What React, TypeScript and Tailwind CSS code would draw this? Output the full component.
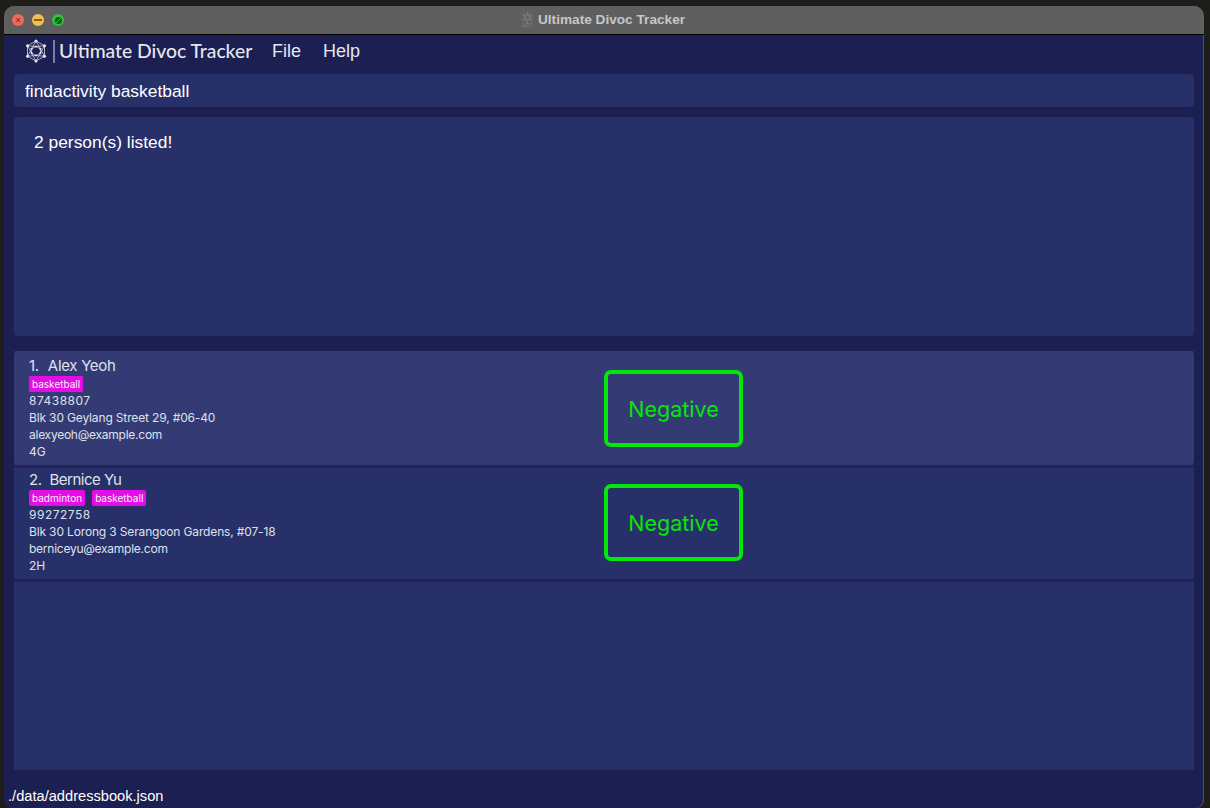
const Logo = ({ size = 20, color = "#e8e8f0", sw = 0.7 }: { size?: number; color?: string; sw?: number }) => {
  const outer: [number, number][] = [[12, 2], [20.5, 6.8], [20.5, 17.2], [12, 22], [3.5, 17.2], [3.5, 6.8]];
  const inner: [number, number][] = [[12, 7.5], [16.4, 9.8], [16.4, 14.2], [12, 16.5], [7.6, 14.2], [7.6, 9.8]];
  return (
    <svg width={size} height={size} viewBox="0 0 24 24" fill="none" stroke={color} strokeWidth={sw}>
      <polygon points={outer.map((p) => p.join(",")).join(" ")} />
      <polygon points={inner.map((p) => p.join(",")).join(" ")} />
      {outer.map((p, i) => (
        <g key={i}>
          <line x1={p[0]} y1={p[1]} x2={inner[(i + 1) % 6][0]} y2={inner[(i + 1) % 6][1]} />
          <line x1={p[0]} y1={p[1]} x2={inner[(i + 5) % 6][0]} y2={inner[(i + 5) % 6][1]} />
        </g>
      ))}
      {outer.map((p, i) => (
        <circle key={i} cx={p[0]} cy={p[1]} r="1.5" fill={color} stroke="none" />
      ))}
      {inner.map((p, i) => (
        <circle key={i} cx={p[0]} cy={p[1]} r="1.1" fill={color} stroke="none" />
      ))}
    </svg>
  );
};

const Card = ({
  index,
  name,
  tags,
  phone,
  address,
  email,
  room,
  bg,
  h,
  pt,
  nameClass,
}: {
  index: number;
  name: string;
  tags: string[];
  phone: string;
  address: string;
  email: string;
  room: string;
  bg: string;
  h: string;
  pt: string;
  nameClass: string;
}) => (
  <div className={`flex ${h} rounded-[5px] pl-[15px] ${pt} ${bg}`}>
    <div className="flex w-[575px] shrink-0 flex-col font-['Inter',sans-serif] text-[12px] leading-[17px] text-[#dfe0ec]">
      <div className={`flex h-[18px] items-center text-[15px] leading-[18px] ${nameClass}`}>
        <span>{index}.</span>
        <span>{name}</span>
      </div>
      <div className="mt-[1px] flex h-[16px] items-center gap-[7px]">
        {tags.map((t) => (
          <span
            key={t}
            className="flex h-[16px] items-center rounded-[2px] bg-[#e60ce6] px-[3px] text-[10px] leading-[16px] text-[#f4f4f8]"
          >
            {t}
          </span>
        ))}
      </div>
      <div className="tracking-[0.5px]">{phone}</div>
      <div className="tracking-[-0.15px]">{address}</div>
      <div className="tracking-[-0.25px]">{email}</div>
      <div>{room}</div>
    </div>
    <div className="mt-[13px] flex h-[77px] w-[139px] items-center justify-center rounded-[7px] border-[4px] border-[#05e60a] pt-[2px] font-['Inter',sans-serif] text-[21.5px] text-[#05e60a]">
      Negative
    </div>
  </div>
);

export default function App() {
  return (
    <div className="h-[808px] w-[1210px] overflow-hidden bg-[#1d1e19] pl-[4px] pt-[6px]">
      <div className="flex h-[802px] w-[1200px] flex-col overflow-hidden rounded-t-[10px] rounded-b-[8px] bg-[#1c1f52] shadow-[inset_-1px_0_0_#4a4f80]">
        <div className="relative flex h-[29px] shrink-0 items-center justify-center border-b border-black bg-[#5f5f5f]">
          <div className="absolute left-[8px] top-[8px] flex gap-[8px]">
            <span className="flex h-3 w-3 items-center justify-center rounded-full bg-[#ed6a5e] text-[10px] leading-none text-[#8a1f14]">×</span>
            <span className="flex h-3 w-3 items-center justify-center rounded-full bg-[#f4bf4f]">
              <span className="h-[2px] w-[8px] bg-[#8f5a10]" />
            </span>
            <span className="flex h-3 w-3 items-center justify-center rounded-full bg-[#2fc13f]">
              <span className="h-[7px] w-[7px] rounded-full bg-[linear-gradient(135deg,#0e5f16_45%,#2fc13f_45%,#2fc13f_55%,#0e5f16_55%)]" />
            </span>
          </div>
          <div className="flex items-center gap-[5px] pr-[1px]">
            <div className="flex flex-col items-center opacity-60">
              <Logo size={11} color="#a8a8a8" />
              <span className="font-['Liberation_Sans',sans-serif] text-[5px] leading-[5px] text-[#a8a8a8]">UDT</span>
            </div>
            <span className="font-['Liberation_Sans',sans-serif] text-[13.65px] font-bold text-[#c6c6c6]">
              Ultimate Divoc Tracker
            </span>
          </div>
        </div>

        <div className="flex h-[39px] shrink-0 items-center pl-[20px] pb-[7px] text-[#e6e6f0]">
          <Logo size={24} />
          <span className="ml-[5px] h-[23px] w-[2px] bg-[#7c7fa4]" />
          <span className="ml-[4px] w-[194px] whitespace-nowrap font-['Lato',sans-serif] text-[19.3px] font-medium leading-[24px]">
            Ultimate Divoc Tracker
          </span>
          <span className="ml-[19px] font-['Liberation_Sans',sans-serif] text-[18px] leading-[24px]">File</span>
          <span className="ml-[22px] font-['Liberation_Sans',sans-serif] text-[18px] leading-[24px]">Help</span>
        </div>

        <div className="mx-[10px] flex h-[33px] shrink-0 items-center rounded-[4px] bg-[#283069] pl-[11px] pt-[1px] font-['Liberation_Sans',sans-serif] text-[17.4px] text-white">
          findactivity basketball
        </div>

        <div className="mx-[10px] mt-[10px] h-[219px] shrink-0 rounded-[4px] bg-[#283069] pl-[20px] pt-[14px] font-['Liberation_Sans',sans-serif] text-[17.4px] leading-[22px] text-white">
          2 person(s) listed!
        </div>

        <div className="mx-[10px] mt-[15px] flex h-[419px] shrink-0 flex-col bg-[#283069]">
          <Card
            index={1}
            name="Alex Yeoh"
            tags={["basketball"]}
            phone="87438807"
            address="Blk 30 Geylang Street 29, #06-40"
            email="alexyeoh@example.com"
            room="4G"
            bg="bg-[#343b74]"
            h="h-[114px]"
            pt="pt-[6px]"
            nameClass="gap-[9px] tracking-[-0.3px]"
          />
          <div className="h-[3px] shrink-0 bg-[#20245a]" />
          <Card
            index={2}
            name="Bernice Yu"
            tags={["badminton", "basketball"]}
            phone="99272758"
            address="Blk 30 Lorong 3 Serangoon Gardens, #07-18"
            email="berniceyu@example.com"
            room="2H"
            bg="bg-[#283069]"
            h="h-[111px]"
            pt="pt-[3px]"
            nameClass="gap-[8px] tracking-[-0.5px]"
          />
          <div className="h-[3px] shrink-0 bg-[#20245a]" />
        </div>

        <div className="flex flex-1 items-end pb-[3px] pl-[4px] font-['Liberation_Sans',sans-serif] text-[14.65px] leading-[18px] text-white">
          ./data/addressbook.json
        </div>
      </div>
    </div>
  );
}
